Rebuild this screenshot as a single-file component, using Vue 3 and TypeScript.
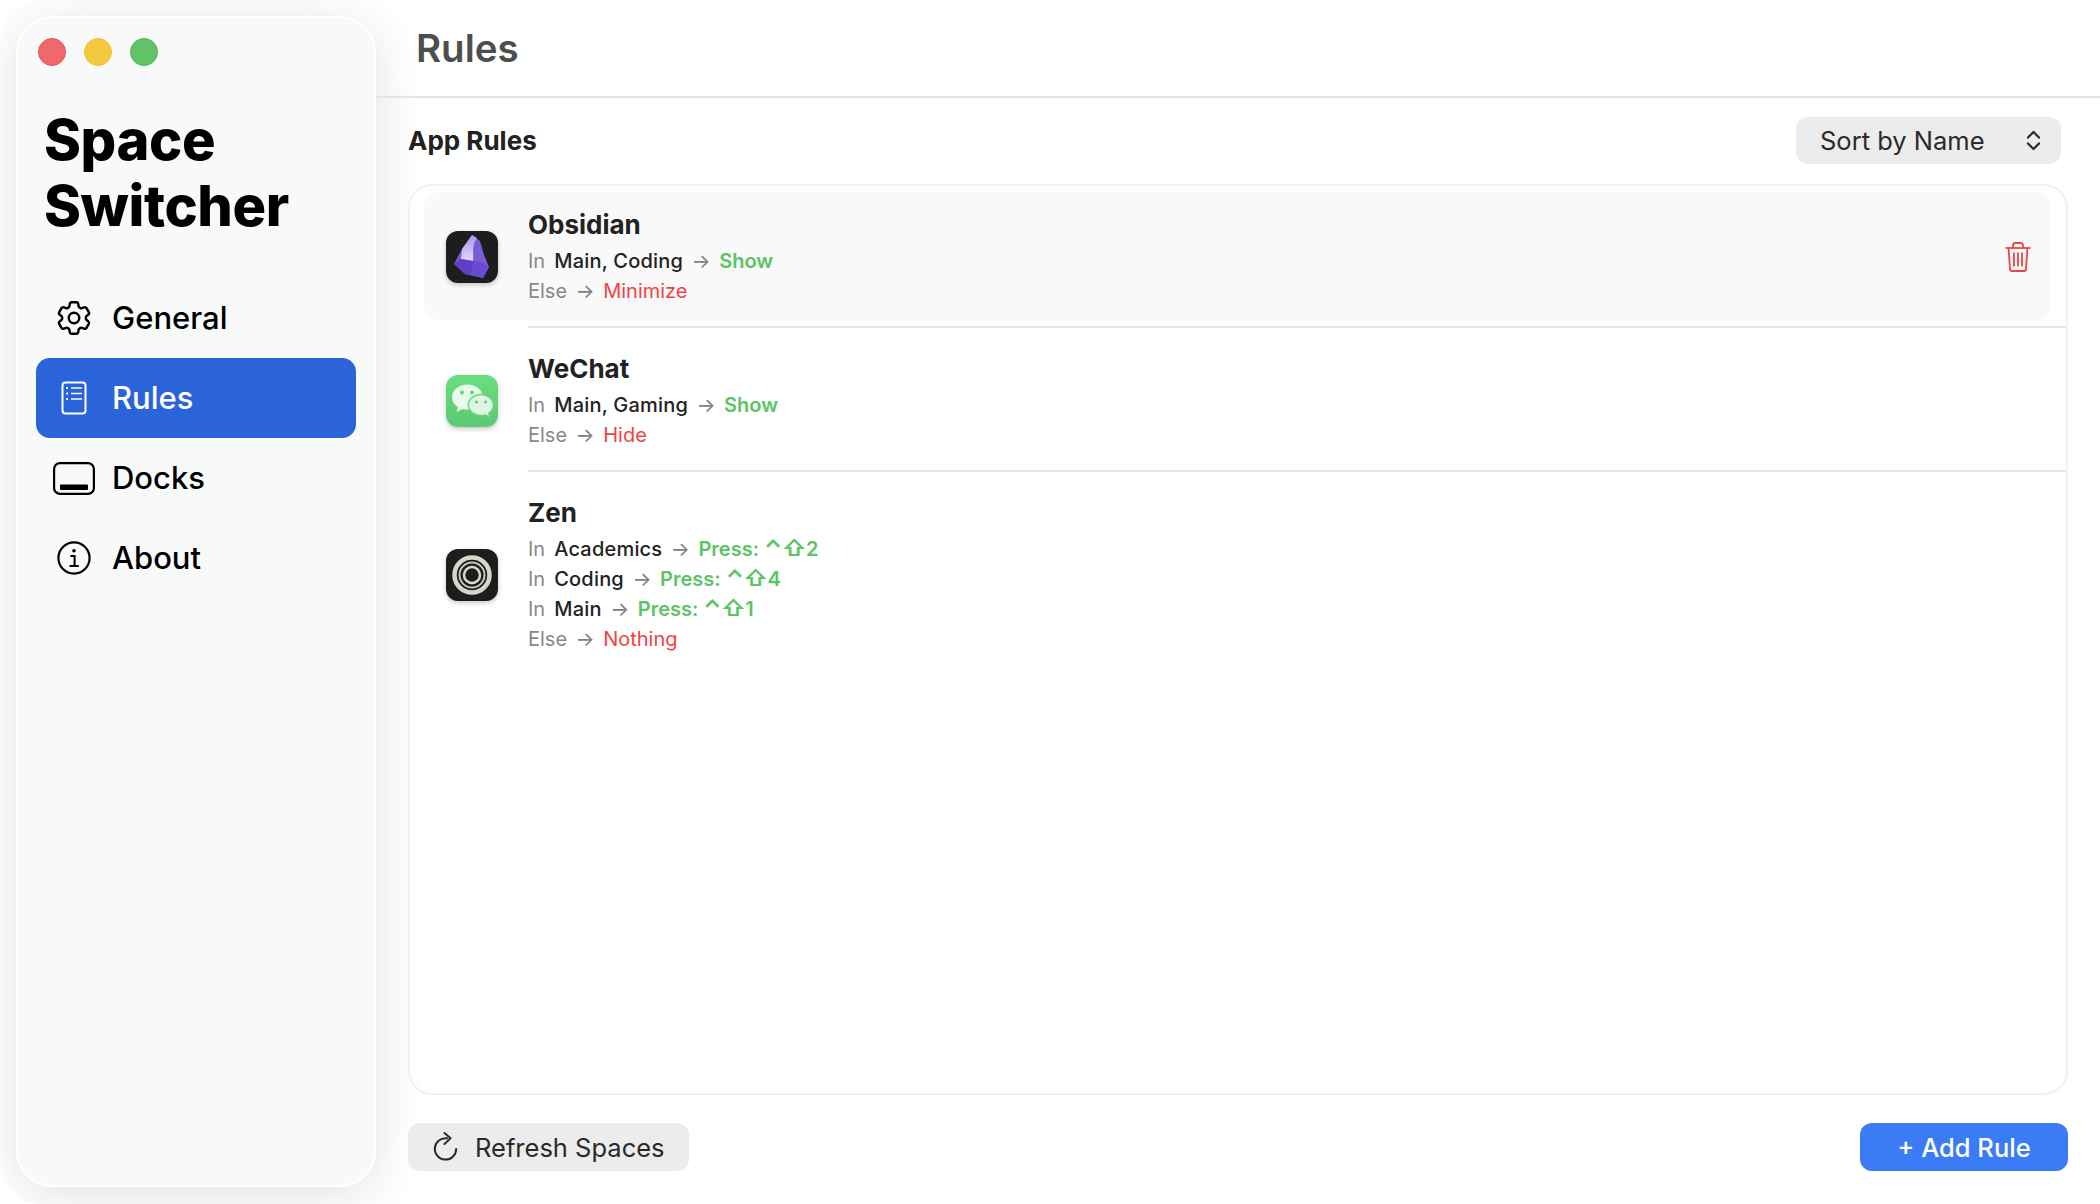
<script setup lang="ts">
interface Line { label: string; spaces?: string; action: string; keys?: string; digit?: string; tone: 'ok' | 'bad' }
interface Rule { name: string; icon: string; lines: Line[]; selected?: boolean }

const nav = [
  { id: 'general', label: 'General' },
  { id: 'rules', label: 'Rules', active: true },
  { id: 'docks', label: 'Docks' },
  { id: 'about', label: 'About' },
]

const rules: Rule[] = [
  { name: 'Obsidian', icon: 'obsidian', selected: true, lines: [
    { label: 'In', spaces: 'Main, Coding', action: 'Show', tone: 'ok' },
    { label: 'Else', action: 'Minimize', tone: 'bad' },
  ] },
  { name: 'WeChat', icon: 'wechat', lines: [
    { label: 'In', spaces: 'Main, Gaming', action: 'Show', tone: 'ok' },
    { label: 'Else', action: 'Hide', tone: 'bad' },
  ] },
  { name: 'Zen', icon: 'zen', lines: [
    { label: 'In', spaces: 'Academics', action: 'Press:', keys: '⌃⇧', digit: '2', tone: 'ok' },
    { label: 'In', spaces: 'Coding', action: 'Press:', keys: '⌃⇧', digit: '4', tone: 'ok' },
    { label: 'In', spaces: 'Main', action: 'Press:', keys: '⌃⇧', digit: '1', tone: 'ok' },
    { label: 'Else', action: 'Nothing', tone: 'bad' },
  ] },
]
</script>

<template>
  <div class="window">
    <aside class="sidebar">
      <div class="lights">
        <span class="light red"></span>
        <span class="light yellow"></span>
        <span class="light green"></span>
      </div>
      <h1 class="brand">Space<br />Switcher</h1>
      <nav class="nav">
        <div v-for="item in nav" :key="item.id" class="nav-item" :class="{ active: item.active }">
          <span class="nav-icon">
            <svg v-if="item.id === 'general'" width="42" height="42" viewBox="0 0 24 24" fill="none" stroke="currentColor" stroke-width="1.4" stroke-linejoin="round">
              <path d="M9.594 3.94c.09-.542.56-.94 1.11-.94h2.593c.55 0 1.02.398 1.11.94l.213 1.281c.063.374.313.686.645.87.074.04.147.083.22.127.325.196.72.257 1.075.124l1.217-.456a1.125 1.125 0 0 1 1.37.49l1.296 2.247a1.125 1.125 0 0 1-.26 1.431l-1.003.827c-.293.241-.438.613-.43.992a7.723 7.723 0 0 1 0 .255c-.008.378.137.75.43.991l1.004.827c.424.35.534.955.26 1.43l-1.298 2.247a1.125 1.125 0 0 1-1.369.491l-1.217-.456c-.355-.133-.75-.072-1.076.124a6.47 6.47 0 0 1-.22.128c-.331.183-.581.495-.644.869l-.213 1.281c-.09.543-.56.94-1.11.94h-2.594c-.55 0-1.019-.398-1.11-.94l-.213-1.281c-.062-.374-.312-.686-.644-.87a6.52 6.52 0 0 1-.22-.127c-.325-.196-.72-.257-1.076-.124l-1.217.456a1.125 1.125 0 0 1-1.369-.49l-1.297-2.247a1.125 1.125 0 0 1 .26-1.431l1.004-.827c.292-.24.437-.613.43-.991a6.932 6.932 0 0 1 0-.255c.007-.38-.138-.751-.43-.992l-1.004-.827a1.125 1.125 0 0 1-.26-1.43l1.297-2.247a1.125 1.125 0 0 1 1.37-.491l1.216.456c.356.133.751.072 1.076-.124.072-.044.146-.086.22-.128.332-.183.582-.495.644-.869l.214-1.28Z" />
              <circle cx="12" cy="12" r="3" />
            </svg>
            <svg v-else-if="item.id === 'rules'" width="26" height="34" viewBox="0 0 26 34" fill="none" stroke="currentColor" stroke-width="2">
              <rect x="1.5" y="1.5" width="23" height="31" rx="3" />
              <path d="M10 7h11M10 12.5h11M10 18h11" stroke-width="1.7" />
              <path d="M5.2 7h1.8M5.2 12.5h1.8M5.2 18h1.8" stroke-width="2" />
            </svg>
            <svg v-else-if="item.id === 'docks'" width="42" height="33" viewBox="0 0 42 33" fill="none" stroke="currentColor" stroke-width="2.2">
              <rect x="1.1" y="1.1" width="39.8" height="30.8" rx="6" />
              <rect x="7" y="22.5" width="28" height="5.5" rx="1" fill="currentColor" stroke="none" />
            </svg>
            <svg v-else width="34" height="34" viewBox="0 0 34 34" fill="none" stroke="currentColor" stroke-width="2.2">
              <circle cx="17" cy="17" r="15.6" />
              <circle cx="17" cy="9.8" r="1.8" fill="currentColor" stroke="none" />
              <path d="M13.4 15h4.2v10M12.6 25h9.2" stroke-width="2.1" />
            </svg>
          </span>
          <span class="nav-label">{{ item.label }}</span>
        </div>
      </nav>
    </aside>

    <main class="main">
      <header class="topbar"><h2 class="title">Rules</h2></header>
      <section class="content">
        <div class="section-head">
          <h3 class="section-title">App Rules</h3>
          <div class="select">
            <span>Sort by Name</span>
            <svg width="15" height="21" viewBox="0 0 15 21" fill="none" stroke="#2a2a2a" stroke-width="2.2" stroke-linecap="round" stroke-linejoin="round">
              <path d="M2 7.6 7.5 2 13 7.6M2 13.4 7.5 19 13 13.4" />
            </svg>
          </div>
        </div>

        <div class="card">
          <template v-for="(rule, i) in rules" :key="rule.name">
            <div v-if="i > 0" class="divider"></div>
            <div class="rule" :class="{ selected: rule.selected }">
              <span class="app-icon" :class="rule.icon">
                <svg v-if="rule.icon === 'obsidian'" width="52" height="52" viewBox="0 0 52 52">
                  <defs>
                    <linearGradient id="ob1" x1="0.4" y1="0" x2="0.5" y2="1">
                      <stop offset="0" stop-color="#a893ee" />
                      <stop offset="1" stop-color="#e2d9fb" />
                    </linearGradient>
                  </defs>
                  <path d="M26 4 34 10 38 24 43 36 37 47 19 43 8 33 16 18Z" fill="#7a5bd6" />
                  <path d="M26 4 16 18 15 28 27 30C28 22 25 15 31 7Z" fill="url(#ob1)" />
                  <path d="M15 28 8 33 19 43 24 44C27 38 27 34 27 30Z" fill="#5d3fc5" />
                  <path d="M27 30C27 36 26 40 24 44L37 47 43 36C38 31 33 30 27 30Z" fill="#6a4ad0" />
                </svg>
                <svg v-else-if="rule.icon === 'wechat'" width="52" height="52" viewBox="0 0 52 52">
                  <path d="M21.5 9.5C12.9 9.5 6 15.2 6 22.2c0 4 2.2 7.5 5.8 9.8L10.6 37l5.500-3c1.700.5 3.500.8 5.400.8 8.600 0 15.500-5.600 15.500-12.600S30.100 9.500 21.500 9.500Z" fill="#e9f9ec" />
                  <path d="M35 19.500c-7 0-12.700 4.700-12.700 10.500S28 40.500 35 40.500c1.500 0 3-.2 4.300-.6l4.500 2.500-1-4.200c2.900-1.900 4.700-4.800 4.700-8.200 0-5.800-5.500-10.500-12.500-10.500Z" fill="#def6e3" stroke="#69d57f" stroke-width="1.500" />
                  <circle cx="16" cy="17.500" r="1.900" fill="#62d277" />
                  <circle cx="26" cy="17.500" r="1.900" fill="#62d277" />
                  <circle cx="30.500" cy="27" r="1.600" fill="#62d277" />
                  <circle cx="39.500" cy="27" r="1.600" fill="#62d277" />
                </svg>
                <svg v-else width="52" height="52" viewBox="0 0 52 52" fill="none">
                  <circle cx="26" cy="26" r="17.500" stroke="#d8d6cc" stroke-width="4.500" />
                  <circle cx="26" cy="26" r="12.500" stroke="#c8c6bc" stroke-width="2" />
                  <circle cx="26" cy="26" r="8" stroke="#dcdad0" stroke-width="2.500" />
                </svg>
              </span>
              <div class="rule-body">
                <div class="rule-name">{{ rule.name }}</div>
                <div v-for="(line, j) in rule.lines" :key="j" class="rule-line">
                  <span class="muted">{{ line.label }}</span>
                  <span v-if="line.spaces" class="spaces">{{ line.spaces }}</span>
                  <span class="arrow">→</span>
                  <span :class="line.tone">{{ line.action }}<span v-if="line.keys" class="keys">{{ line.keys }}</span>{{ line.digit }}</span>
                </div>
              </div>
              <svg v-if="rule.selected" class="trash" width="26" height="30" viewBox="0 0 26 30" fill="none" stroke="#ef4444" stroke-width="1.800" stroke-linejoin="round">
                <path d="M0.500 6h25" />
                <path d="M8 6V3.500A2.500 2.500 0 0 1 10.500 1h5A2.500 2.500 0 0 1 18 3.500V6" />
                <path d="M3.500 6 5 27a2 2 0 0 0 2 2h12a2 2 0 0 0 2-2l1.500-21" />
                <path d="M9 10.500v14M13 10.500v14M17 10.500v14" />
              </svg>
            </div>
          </template>
        </div>

        <footer class="footer">
          <button class="btn refresh">
            <svg width="26" height="30" viewBox="0 0 26 30" fill="none" stroke="#2a2a2a" stroke-width="2" stroke-linecap="round" stroke-linejoin="round">
              <path d="M14 6.300A10.700 10.700 0 1 0 23.200 17" />
              <path d="M11.500 1 17.500 6.300 11.500 12" />
            </svg>
            <span>Refresh Spaces</span>
          </button>
          <button class="btn add">+ Add Rule</button>
        </footer>
      </section>
    </main>
  </div>
</template>

<style scoped>
.window {
  display: flex;
  width: 2100px;
  height: 1204px;
  background: #fff;
  font-family: Inter, "Noto Sans", sans-serif;
  color: #222;
  overflow: hidden;
  border-radius: 40px 0 0 40px;
}
.sidebar {
  flex: none;
  box-sizing: border-box;
  width: 360px;
  height: 1171px;
  margin: 16px 0 0 16px;
  padding: 20px 20px 0;
  background: #f8f9f9;
  border: 2px solid #fff;
  border-radius: 36px;
  box-shadow: 0 8px 50px rgba(0, 0, 0, 0.12);
}
.lights { display: flex; gap: 18px; }
.light { box-sizing: border-box; width: 28px; height: 28px; border-radius: 50%; border: 1px solid; }
.red { background: #f1686c; border-color: #e8515a; }
.yellow { background: #f4c941; border-color: #efbd2b; }
.green { background: #62c466; border-color: #4fb954; }
.brand {
  margin: 41px 0 0 6px;
  font-size: 56px;
  line-height: 66px;
  font-weight: 800;
  letter-spacing: -0.4px;
  color: #000;
}
.nav { margin-top: 39px; margin-left: -2px; }
.nav-item {
  display: flex;
  align-items: center;
  width: 320px;
  height: 80px;
  border-radius: 14px;
  color: #000;
}
.nav-item.active { background: #2b63d9; color: #fff; }
.nav-icon { flex: none; width: 76px; display: flex; justify-content: center; }
.nav-label { font-size: 31px; font-weight: 500; margin-top: -2px; }
.main { flex: 1; min-width: 0; display: flex; flex-direction: column; }
.topbar {
  flex: none;
  box-sizing: border-box;
  height: 98px;
  padding: 23px 0 0 40px;
  border-bottom: 2px solid #e4e4e4;
}
.title { margin: 0; font-size: 38.5px; line-height: 50px; font-weight: 600; color: #4d4d4d; }
.content { flex: 1; display: flex; flex-direction: column; padding: 0 32px 32px; min-height: 0; }
.section-head {
  flex: none;
  display: flex;
  align-items: center;
  justify-content: space-between;
  height: 86px;
  padding-right: 7px;
}
.section-title { margin: -2px 0 0; font-size: 26px; font-weight: 700; color: #222; }
.select {
  box-sizing: border-box;
  width: 265px;
  height: 47px;
  margin-top: -1px;
  padding: 0 20px 0 24px;
  display: flex;
  align-items: center;
  justify-content: space-between;
  background: #ececec;
  border-radius: 12px;
  font-size: 25.5px;
  color: #2a2a2a;
}
.card {
  flex: 1;
  min-height: 0;
  box-sizing: border-box;
  border: 2px solid #f1f1f1;
  border-radius: 24px;
  padding-top: 6px;
}
.rule {
  position: relative;
  display: flex;
  align-items: center;
  margin: 0 16px 6px 14px;
  padding: 18px 19px 14px 22px;
  border-radius: 14px;
}
.divider + .rule { margin-top: 8px; }
.rule.selected { background: #f9f9f9; }
.divider { height: 2px; margin-left: 118px; background: #e6e6e6; }
.app-icon {
  flex: none;
  width: 52px;
  height: 52px;
  margin-bottom: 3px;
  border-radius: 12px;
  box-shadow: 0 2px 5px rgba(0, 0, 0, 0.22);
  overflow: hidden;
}
.obsidian { background: #1d1d1d; }
.wechat { background: linear-gradient(#69de80, #5cc873); }
.zen { background: #1d1d1d; }
.rule-body { flex: 1; margin-left: 30px; min-width: 0; }
.rule-name { font-size: 26px; line-height: 30px; font-weight: 700; color: #222; margin-bottom: 6px; }
.rule-line { display: flex; align-items: center; gap: 9px; height: 30px; font-size: 20px; }
.muted { color: #888; }
.spaces { color: #222; font-weight: 500; letter-spacing: 0.2px; }
.arrow { color: #808080; margin: 0 -0.5px; }
.ok { color: #5bc466; font-weight: 600; }
.bad { color: #ef4444; font-weight: 400; }
.keys { font-size: 22.5px; font-weight: 700; margin-left: 5px; line-height: 0; letter-spacing: -0.5px; }
.trash { flex: none; margin-bottom: 2px; }
.footer {
  flex: none;
  display: flex;
  align-items: flex-start;
  justify-content: space-between;
  padding-top: 28px;
  height: 49px;
  box-sizing: content-box;
}
.btn {
  border: 0;
  font-family: inherit;
  font-size: 25.5px;
  height: 48px;
  border-radius: 12px;
  display: flex;
  align-items: center;
  padding: 0;
}
.refresh {
  width: 281px;
  gap: 16px;
  padding-left: 25px;
  box-sizing: border-box;
  background: #ececec;
  color: #2a2a2a;
}
.add {
  width: 208px;
  justify-content: center;
  background: #3b7bf6;
  color: #fff;
  font-weight: 500;
}
</style>
